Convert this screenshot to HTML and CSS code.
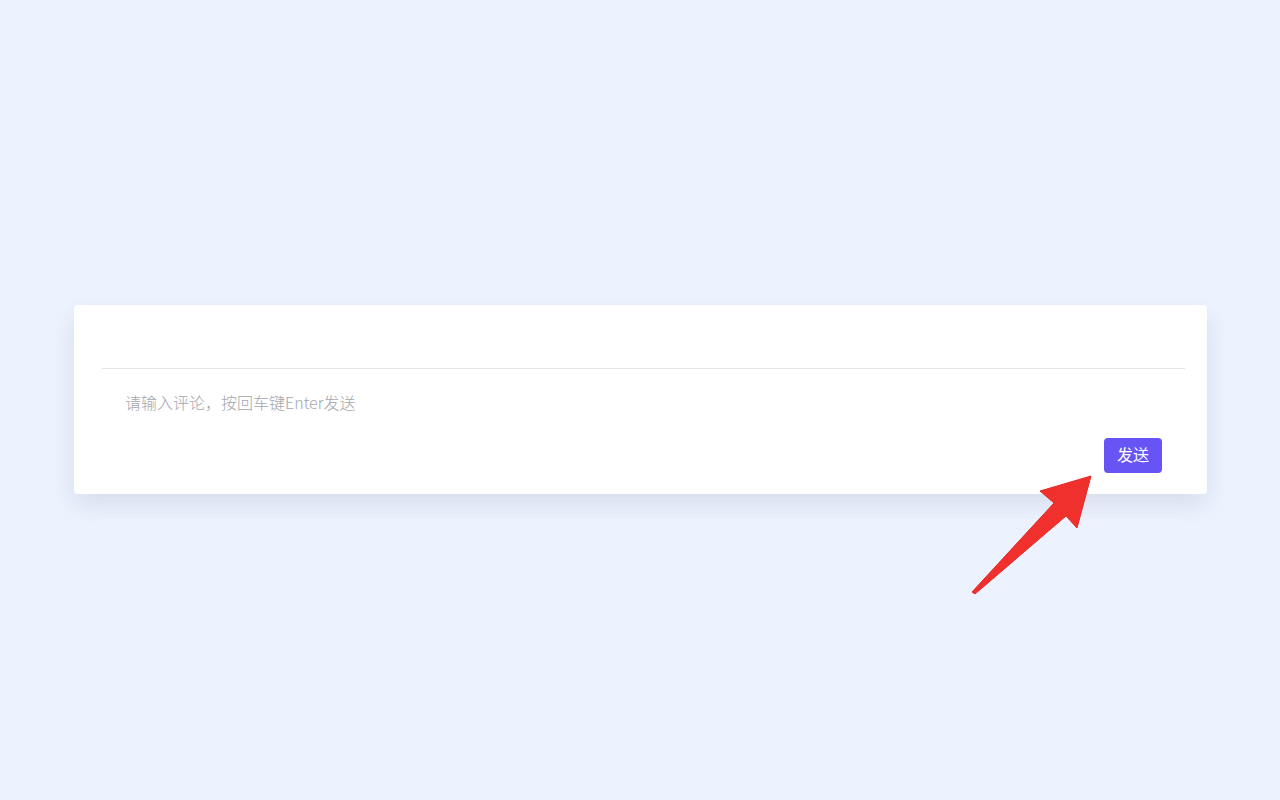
FILE: index.html
```html
<!DOCTYPE html>
<html lang="zh">
<head>
<meta charset="utf-8">
<link rel="stylesheet" href="styles.css">
</head>
<body>
<div class="page">
  <div class="card">
    <div class="top"></div>
    <div class="input">请输入评论，按回车键Enter发送</div>
    <div class="footer">
      <button class="send">发送</button>
    </div>
  </div>
</div>
<svg class="arrow" width="1280" height="800" viewBox="0 0 1280 800">
  <polygon points="1091,476 1040,491 1054,503 972,592 975,594 1066,516 1077,528" fill="#f0302c" stroke="#e52a26" stroke-width="1" stroke-linejoin="round"/>
</svg>
</body>
</html>
```
FILE: styles.css
```css
html, body {
  margin: 0;
  padding: 0;
}
body {
  background: #edf3fe;
  font-family: "PingFang SC", "Noto Sans CJK SC", "Noto Sans", sans-serif;
  width: 1280px;
  height: 800px;
  overflow: hidden;
  position: relative;
}
.page {
  padding: 305px 73px 0 74px;
}
.card {
  background: #fff;
  border-radius: 4px;
  box-shadow: 0 10px 24px rgba(150, 160, 190, 0.28);
  padding: 0 22px 21px 28px;
}
.top {
  height: 63px;
  border-bottom: 1px solid #e3e5ea;
}
.input {
  padding: 22px 23px 0;
  font-size: 16px;
  line-height: 22px;
  font-weight: 300;
  color: #a3a6ad;
}
.footer {
  display: flex;
  justify-content: flex-end;
  padding: 25px 23px 0 0;
}
.send {
  width: 58px;
  height: 35px;
  border: none;
  border-radius: 4px;
  background: #6654f5;
  color: #fff;
  font-family: inherit;
  font-size: 16px;
  line-height: 33px;
  padding: 0 0 2px;
}
.arrow {
  position: absolute;
  left: 0;
  top: 0;
  pointer-events: none;
}
```
